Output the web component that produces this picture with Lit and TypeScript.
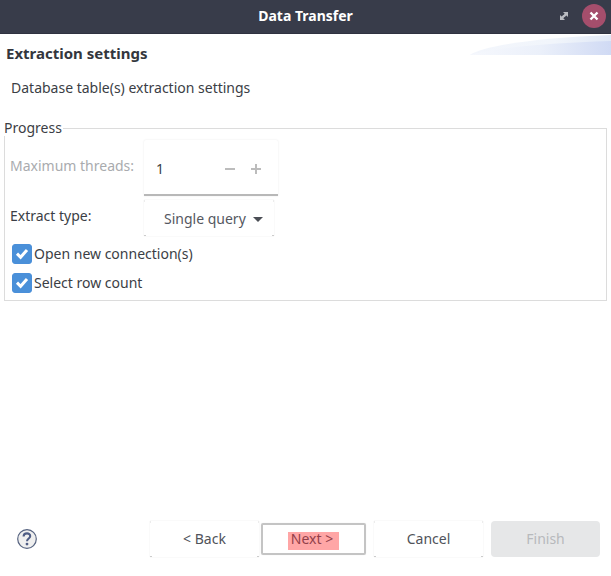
import { LitElement, html, css } from "lit";
import { customElement, state } from "lit/decorators.js";

@customElement("app-root")
export class AppRoot extends LitElement {
  @state() private threads = 1;

  static styles = css`
    :host {
      display: flex;
      flex-direction: column;
      min-height: 100vh;
      box-sizing: border-box;
      background: #fff;
      color: #3b3e45;
      font: 14px/20px "Noto Sans", "Open Sans", sans-serif;
    }
    * { box-sizing: border-box; }
    button, input, select {
      font: inherit;
      color: inherit;
      margin: 0;
      padding: 0;
      border: 0;
      background: none;
    }
    .titlebar {
      display: grid;
      grid-template-columns: 1fr auto 1fr;
      align-items: center;
      height: 34px;
      padding: 0 5px 2px;
      background: #383c4a;
      border-bottom: 1px solid #2f3240;
      color: #fff;
    }
    .title {
      grid-column: 2;
      margin: 0;
      font-size: 14px;
      font-weight: 700;
    }
    .controls {
      display: flex;
      justify-content: flex-end;
      gap: 6px;
    }
    .control { width: 24px; height: 24px; }
    .control svg, .help svg { display: block; }
    .header {
      display: flex;
      justify-content: space-between;
      height: 86px;
      padding-left: 6px;
    }
    .heading {
      margin: 9px 0 15px;
      font-size: 15px;
      font-weight: 700;
      line-height: 20px;
      color: #33363d;
    }
    .description { margin: 0 0 0 5px; }
    .swoosh { flex: none; margin-top: 1px; }
    .group {
      margin: 0 4px;
      padding: 4px 5px 7px;
      border: 1px solid #dcdcdc;
      min-width: 0;
    }
    .group legend {
      margin-left: -6px;
      padding: 0 1px 0 0;
      line-height: 16px;
    }
    .row {
      display: grid;
      grid-template-columns: 134px auto;
      justify-content: start;
    }
    .row label { padding-top: 16px; }
    .row label.dim { color: #a9abae; }
    .row label.type { padding-top: 10px; }
    .spinner {
      display: flex;
      align-items: center;
      width: 134px;
      height: 56px;
      padding-top: 4px;
      border-bottom: 2px solid #b8b8b8;
      border-radius: 2px 2px 0 0;
      box-shadow: 0 0 2px rgba(0, 0, 0, 0.1);
    }
    .spinner input {
      width: 73px;
      padding-left: 12px;
      outline: none;
    }
    .step { width: 26px; height: 26px; }
    .step svg { display: block; margin: auto; }
    .combo, .button {
      background:
        linear-gradient(#ccc, #ccc) left bottom / 2px 1px no-repeat,
        linear-gradient(#ccc, #ccc) right bottom / 2px 1px no-repeat,
        linear-gradient(#ececec, #ececec) left top / 1px 2px no-repeat,
        linear-gradient(#ececec, #ececec) right top / 1px 2px no-repeat;
      box-shadow: 0 0 1px rgba(0, 0, 0, 0.12);
    }
    .combo {
      display: grid;
      align-items: center;
      width: 130px;
      height: 36px;
      margin-top: 4px;
      padding-top: 2px;
    }
    .combo select {
      grid-area: 1 / 1;
      height: 34px;
      padding-left: 20px;
      appearance: none;
      outline: none;
      color: #55585f;
    }
    .combo svg {
      grid-area: 1 / 1;
      justify-self: end;
      margin-right: 11px;
      pointer-events: none;
    }
    .check {
      display: flex;
      align-items: center;
      gap: 2px;
      height: 21px;
      margin: 7px 0 8px 2px;
    }
    .check + .check { margin-bottom: 0; }
    .tick { display: grid; }
    .tick input {
      grid-area: 1 / 1;
      width: 20px;
      height: 20px;
      appearance: none;
      border-radius: 3px;
      border: 1px solid #4a8fd9;
    }
    .tick input:checked { background: #4a90d9; }
    .tick svg { grid-area: 1 / 1; pointer-events: none; visibility: hidden; }
    .tick input:checked + svg { visibility: visible; }
    .footer {
      display: flex;
      align-items: center;
      margin-top: auto;
      padding: 0 11px 19px 17px;
    }
    .help { width: 20px; height: 20px; margin-right: auto; }
    .actions { display: flex; gap: 8px; }
    .button {
      width: 109px;
      height: 36px;
      color: #50535a;
    }
    .button:disabled {
      background: #e6e7e8;
      border-radius: 4px;
      color: #b7b9bc;
      box-shadow: none;
    }
    .pair { display: flex; gap: 2px; }
    .button.focused {
      width: 105px;
      height: 32px;
      margin: 2px 0;
      padding-top: 4px;
      background: none;
      border: 2px solid #c4c4c4;
      border-radius: 2px;
    }
    .mark {
      display: block;
      width: fit-content;
      margin: 0 auto;
      padding: 0 6px 4px 3px;
      line-height: 14px;
      background: #ffa6a6;
      color: #92404a;
    }
  `;

  private step(by: number) {
    this.threads = Math.max(1, this.threads + by);
  }

  private check(id: string, label: string) {
    return html`<div class="check">
      <span class="tick">
        <input id=${id} type="checkbox" checked />
        <svg width="20" height="20" viewBox="0 0 20 20">
          <path d="M5 9.600 8.600 13.200 15 6" fill="none" stroke="#fff" stroke-width="3" />
        </svg>
      </span>
      <label for=${id}>${label}</label>
    </div>`;
  }

  render() {
    return html`
      <header class="titlebar">
        <h1 class="title">Data Transfer</h1>
        <div class="controls">
          <button class="control" aria-label="Maximize">
            <svg width="24" height="24" viewBox="0 0 24 24" fill="#b9bbc1">
              <path d="M11 8h5v5l-1.600-1.600-1.700 1.700-1.700-1.700 1.700-1.700zM8 11l1.600 1.600 1.700-1.700 1.700 1.700-1.700 1.700L13 16H8z" />
            </svg>
          </button>
          <button class="control" aria-label="Close">
            <svg width="24" height="24" viewBox="0 0 24 24">
              <circle cx="12" cy="12" r="12" fill="#a54e6c" />
              <path d="M8.500 8.500l7 7M15.500 8.500l-7 7" stroke="#fff" stroke-width="2.400" />
            </svg>
          </button>
        </div>
      </header>

      <section class="header">
        <div>
          <h2 class="heading">Extraction settings</h2>
          <p class="description">Database table(s) extraction settings</p>
        </div>
        <svg class="swoosh" width="141" height="20" viewBox="0 0 141 20">
          <defs>
            <linearGradient id="outer">
              <stop offset="0" stop-color="#f3f6fc" />
              <stop offset="0.6" stop-color="#f1f5fb" />
              <stop offset="1" stop-color="#e0e8f6" />
            </linearGradient>
            <linearGradient id="inner">
              <stop offset="0" stop-color="#f6f8fd" />
              <stop offset="0.5" stop-color="#ebf0fa" />
              <stop offset="1" stop-color="#d0daf4" />
            </linearGradient>
          </defs>
          <path d="M0 20C10 12 60 3 141 0V20z" fill="url(#outer)" />
          <path d="M0 20C20 14 70 8 141 6V20z" fill="url(#inner)" />
        </svg>
      </section>

      <fieldset class="group">
        <legend>Progress</legend>
        <div class="row">
          <label class="dim" for="threads">Maximum threads:</label>
          <div class="spinner">
            <input id="threads" type="text" inputmode="numeric" .value=${String(this.threads)} />
            <button class="step" aria-label="Decrease" @click=${() => this.step(-1)}>
              <svg width="12" height="12" viewBox="0 0 12 12"><path d="M1 6h10" stroke="#bcbcbc" stroke-width="2" /></svg>
            </button>
            <button class="step" aria-label="Increase" @click=${() => this.step(1)}>
              <svg width="12" height="12" viewBox="0 0 12 12"><path d="M1 6h10M6 1v10" stroke="#bcbcbc" stroke-width="2" /></svg>
            </button>
          </div>
        </div>
        <div class="row">
          <label class="type" for="type">Extract type:</label>
          <div class="combo">
            <select id="type"><option>Single query</option></select>
            <svg width="10" height="5" viewBox="0 0 10 5"><path d="M0 0h10L5 5z" fill="#4b4e55" /></svg>
          </div>
        </div>
        ${this.check("connections", "Open new connection(s)")}
        ${this.check("count", "Select row count")}
      </fieldset>

      <footer class="footer">
        <button class="help" aria-label="Help">
          <svg width="20" height="20" viewBox="0 0 20 20">
            <circle cx="10" cy="10" r="9.300" fill="#efefef" stroke="#566380" stroke-width="1.200" />
            <path d="M6.600 7.600C6.600 3.300 13.400 3.500 13.200 7.200 13.100 9.500 10 9.600 10 12.300" fill="none" stroke="#4f5d85" stroke-width="2.100" />
            <circle cx="10" cy="15.100" r="1.400" fill="#4f5d85" />
          </svg>
        </button>
        <div class="actions">
          <div class="pair">
            <button class="button">&lt; Back</button>
            <button class="button focused"><span class="mark">Next &gt;</span></button>
          </div>
          <button class="button">Cancel</button>
          <button class="button" disabled>Finish</button>
        </div>
      </footer>
    `;
  }
}
